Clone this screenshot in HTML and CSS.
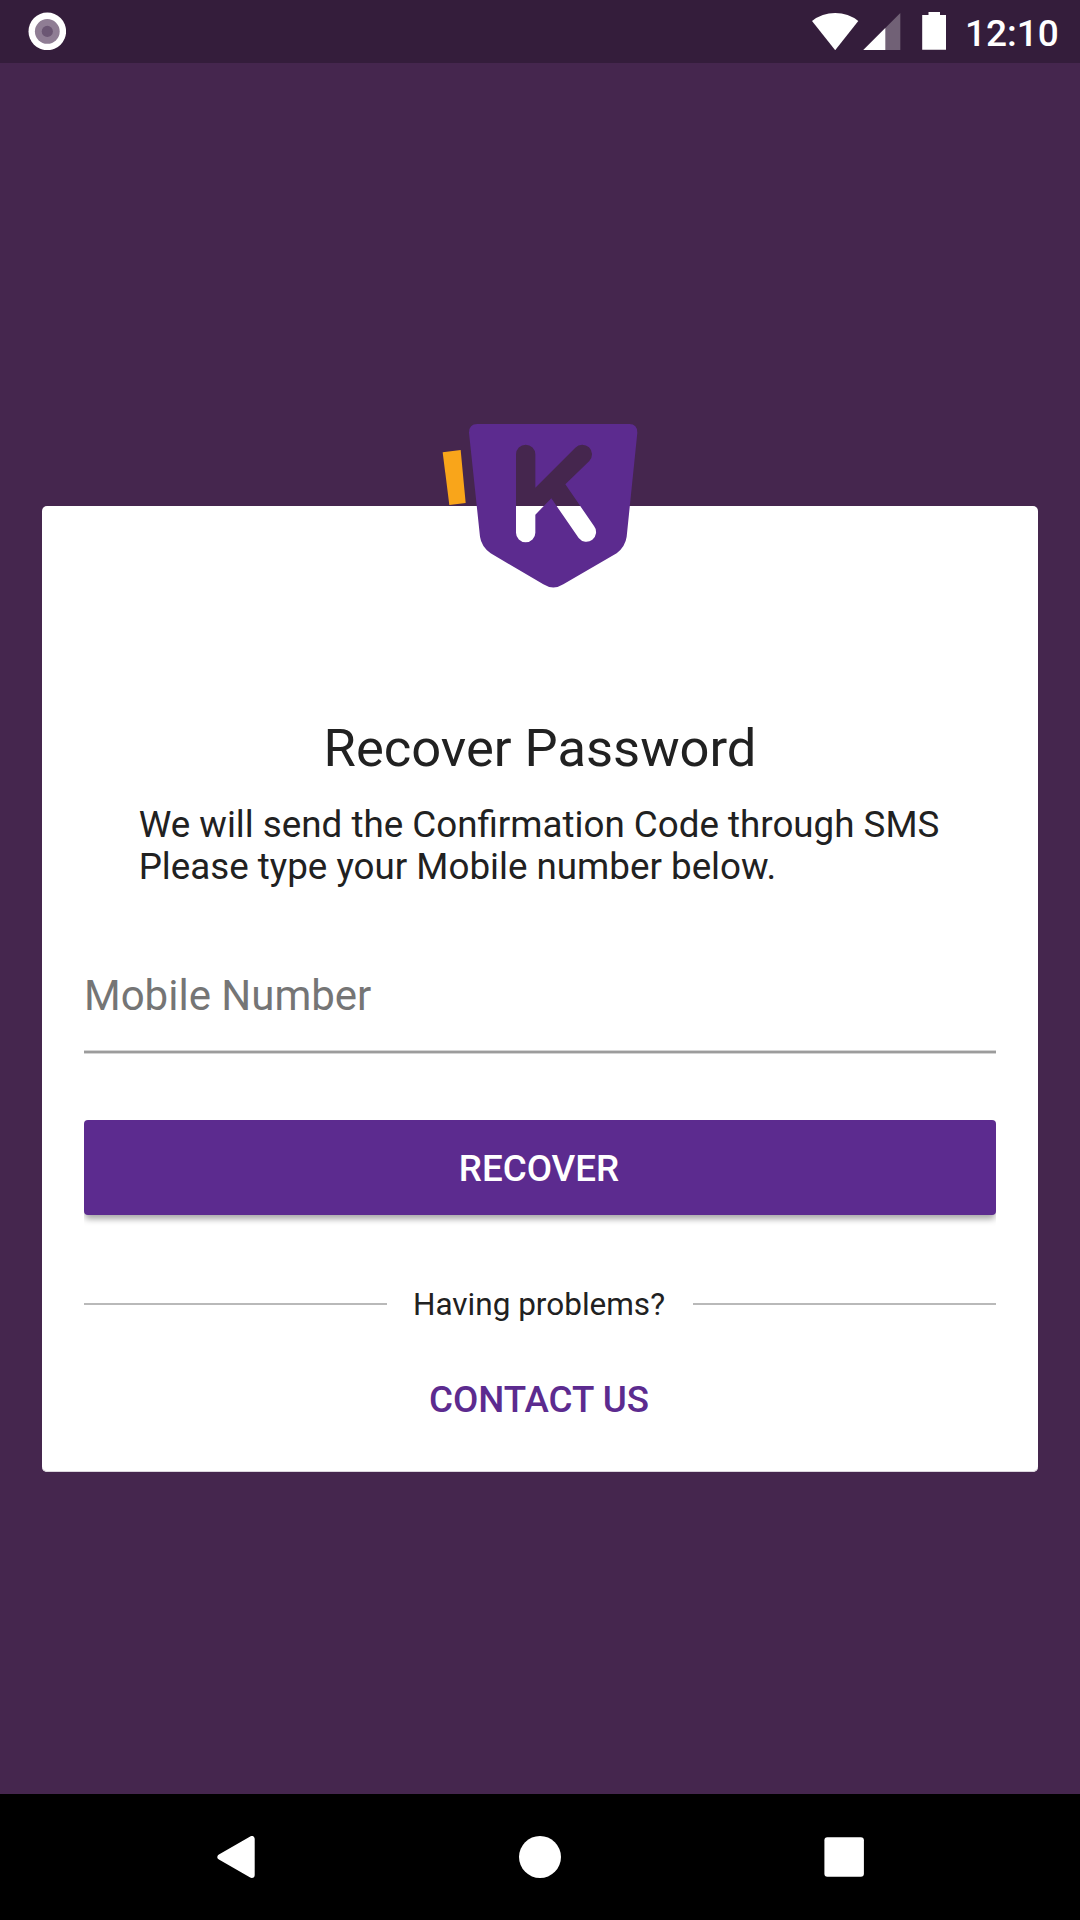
FILE: index.html
```html
<!DOCTYPE html>
<html lang="en">
<head>
<meta charset="utf-8">
<title>Recover Password</title>
<link rel="stylesheet" href="styles.css">
</head>
<body>
<div class="screen">
  <header class="status-bar">
    <svg class="status-notice" width="38" height="38" viewBox="0 0 38 38"><circle cx="19.300" cy="19.400" r="18.800" fill="#fff"/><circle cx="19.300" cy="19.400" r="12.400" fill="#8f7d94"/><circle cx="19.300" cy="19.400" r="5.600" fill="#6b5673"/></svg>
    <svg class="status-icons" width="134" height="38" viewBox="0 0 134 38" fill="#fff">
      <path d="M0 9Q10 1 23.200 1T46.300 9L23.200 38.200Z"/>
      <path d="M88.300 1V38H51.300Z" fill-opacity=".3"/>
      <path d="M73.300 16V38H51.300Z"/>
      <path d="M116.500 0H128V3H134V37.800H110.200V3H116.500Z"/>
    </svg>
    <span class="clock">12:10</span>
  </header>
  <main class="content">
    <section class="card">
      <svg class="logo" width="220" height="190" viewBox="0 0 660 570">
        <path fill="#f9a51a" d="M38 127L92 120L107 279L58 285Z"/>
        <path fill="#5c2b8f" fill-rule="evenodd" d="M142 42H598Q622 42 622 68L590 380Q586 409 560 430L400 523Q370 542 340 523L182 430Q154 409 150 380L117 68Q117 42 142 42ZM258 133A29 29 0 0 1 316 133V233L436 113A29 29 0 0 1 478 153L406 223L492 348A28.500 28.500 0 0 1 446 384L364 265L316 314V368A29 29 0 0 1 258 368Z"/>
      </svg>
      <h1 class="title">Recover Password</h1>
      <p class="message">We will send the Confirmation Code through SMS<br>Please type your Mobile number below.</p>
      <input class="field" type="text" placeholder="Mobile Number">
      <button class="recover">RECOVER</button>
      <div class="divider"><span class="divider-text">Having problems?</span></div>
      <a class="contact">CONTACT US</a>
    </section>
  </main>
  <nav class="nav-bar">
    <svg class="nav-icon" width="42" height="42" viewBox="0 0 42 42"><path d="M37.700 3V39L6.400 21Z" fill="#fff" stroke="#fff" stroke-width="6" stroke-linejoin="round"/></svg>
    <svg class="nav-icon" width="42" height="42" viewBox="0 0 42 42"><circle cx="21" cy="21" r="21" fill="#fff"/></svg>
    <svg class="nav-icon" width="42" height="42" viewBox="0 0 42 42"><rect x=".4" y="1.200" width="39.500" height="39.600" rx="3" fill="#fff"/></svg>
  </nav>
</div>
</body>
</html>
```
FILE: styles.css
```css
* { box-sizing: border-box; }
body { margin: 0; font-family: Roboto, sans-serif; color: #212121; }
.screen { width: 1080px; height: 1920px; display: flex; flex-direction: column; background: #45264e; }
.status-bar { height: 63px; display: flex; align-items: flex-start; padding: 12px 22px 0 28px; background: #341d3b; }
.status-icons { margin-left: auto; }
.clock { width: 93px; margin: 1px 0 0 19px; font-size: 37px; line-height: 42px; font-weight: 500; color: #fff; white-space: nowrap; }
.content { flex: 1; padding: 443px 42px 0; }
.card { position: relative; height: 966px; padding: 211px 42px 0; display: flex; flex-direction: column; background: #fff; border-radius: 5px; box-shadow: inset 0 -1px #dcd6de; }
.logo { position: absolute; left: 388px; top: -96px; }
.title { margin: 0; text-align: center; font-size: 52.5px; line-height: 62px; font-weight: 400; }
.message { align-self: center; margin: 25px 2px 0 0; font-size: 36.75px; line-height: 42px; white-space: nowrap; }
.field { margin-top: 52px; height: 113px; padding: 0; border: 0; border-bottom: 2px solid #9c9c9c; border-radius: 0; outline: 0; background: none; box-shadow: 0 1px #d4d4d4, inset 0 -1px #d4d4d4; font: 42px Roboto, sans-serif; color: #212121; }
.field::placeholder { color: #757575; opacity: 1; }
.recover { margin-top: 67px; height: 95px; padding: 2px 2px 0 0; border: 0; border-radius: 4px; background: #5c2b8f; color: #fff; font: 500 36.75px/93px Roboto, sans-serif; box-shadow: 0 5px 6px -1px rgba(0,0,0,.35); clip-path: inset(0 0 -14px); }
.divider { display: flex; align-items: center; margin-top: 70px; }
.divider::before, .divider::after { content: ""; flex: 0 0 303px; height: 2px; background: #b9b9b9; }
.divider-text { flex: 1; padding: 2px 2px 0 0; text-align: center; font-size: 31.5px; line-height: 36px; }
.contact { margin-top: 55px; padding-right: 2px; text-align: center; color: #5c2b8f; font-size: 36.75px; line-height: 44px; font-weight: 500; }
.nav-bar { height: 126px; display: flex; gap: 263px; align-items: center; padding-left: 214px; background: #000; }
```
